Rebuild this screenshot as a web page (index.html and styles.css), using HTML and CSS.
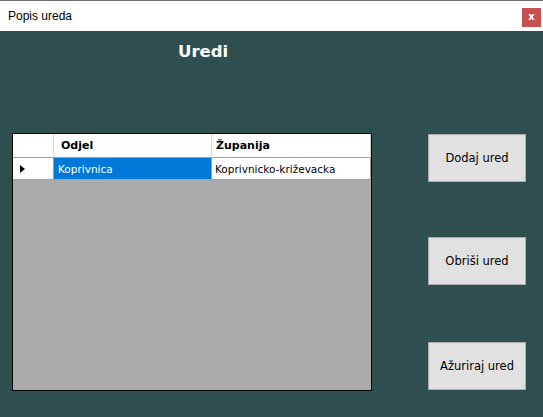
FILE: index.html
```html
<!DOCTYPE html>
<html>
<head>
<meta charset="utf-8">
<title>Popis ureda</title>
<link rel="stylesheet" href="styles.css">
</head>
<body>
<div class="window">
  <div class="titlebar">
    <span class="title">Popis ureda</span>
    <span class="close">x</span>
  </div>
  <div class="content">
    <div class="left">
      <h1 class="heading">Uredi</h1>
      <div class="grid">
        <div class="row header">
          <div class="cell rowhead"></div>
          <div class="cell col1">Odjel</div>
          <div class="cell col2">Županija</div>
        </div>
        <div class="row data">
          <div class="cell rowhead"><span class="arrow"></span></div>
          <div class="cell col1 selected">Koprivnica</div>
          <div class="cell col2">Koprivnicko-križevacka</div>
        </div>
      </div>
    </div>
    <div class="buttons">
      <button class="btn">Dodaj ured</button>
      <button class="btn">Obriši ured</button>
      <button class="btn btn-last">Ažuriraj ured</button>
    </div>
  </div>
</div>
</body>
</html>
```

FILE: styles.css
```css
html, body {
  margin: 0;
  padding: 0;
  background: #2f4f4f;
}
.window {
  width: 543px;
  height: 417px;
  background: #2f4f4f;
  overflow: hidden;
}
.titlebar {
  border-top: 1px solid #707070;
  height: 30px;
  background: #ffffff;
  display: flex;
  align-items: center;
  justify-content: space-between;
  padding: 0 2px 0 8px;
}
.title {
  font-family: "Liberation Sans", Arial, sans-serif;
  font-size: 12px;
  color: #000;
  margin-top: -1px;
}
.close {
  width: 19px;
  height: 19px;
  background: #c75050;
  color: #fff;
  font-family: "DejaVu Sans", sans-serif;
  font-weight: bold;
  font-size: 10px;
  line-height: 17px;
  text-align: center;
  margin-top: 2px;
}
.content {
  display: flex;
  padding-left: 12px;
}
.left {
  width: 360px;
}
.heading {
  margin: 0;
  padding: 10px 0 0 166px;
  height: 22px;
  line-height: 22px;
  font-family: "DejaVu Sans", sans-serif;
  font-weight: bold;
  font-size: 16.5px;
  color: #ffffff;
}
.grid {
  margin-top: 70px;
  width: 358px;
  height: 256px;
  border: 1px solid #000;
  background: #ababab;
  font-family: "DejaVu Sans", sans-serif;
  font-size: 10.5px;
}
.row {
  display: flex;
  background: #fff;
  border-bottom: 1px solid #a0a0a0;
}
.row.header {
  height: 23px;
  font-weight: bold;
  font-size: 11px;
}
.row.data {
  height: 21px;
}
.cell {
  box-sizing: border-box;
  display: flex;
  align-items: center;
  border-right: 1px solid #a0a0a0;
  color: #000;
  white-space: nowrap;
  overflow: hidden;
}
.header .cell {
  border-right-color: #d8d8d8;
}
.rowhead {
  width: 41px;
}
.col1 {
  width: 158px;
  padding-left: 7px;
}
.data .col1 {
  padding-left: 4px;
}
.col2 {
  flex: 1;
  padding-left: 4px;
}
.data .col2 {
  padding-left: 3px;
}
.selected {
  background: #0078d7;
  color: #fff;
}
.arrow {
  width: 0;
  height: 0;
  margin-left: 7px;
  border-top: 4px solid transparent;
  border-bottom: 4px solid transparent;
  border-left: 5px solid #000;
}
.buttons {
  display: flex;
  flex-direction: column;
  gap: 55px;
  padding-top: 103px;
  margin-left: 56px;
}
.btn {
  width: 98px;
  height: 48px;
  background: #e1e1e1;
  border: 1px solid #adadad;
  margin: 0;
  padding: 0;
  font-family: "DejaVu Sans", sans-serif;
  font-size: 11.5px;
  color: #000;
}
.btn-last {
  margin-top: 2px;
}
```
